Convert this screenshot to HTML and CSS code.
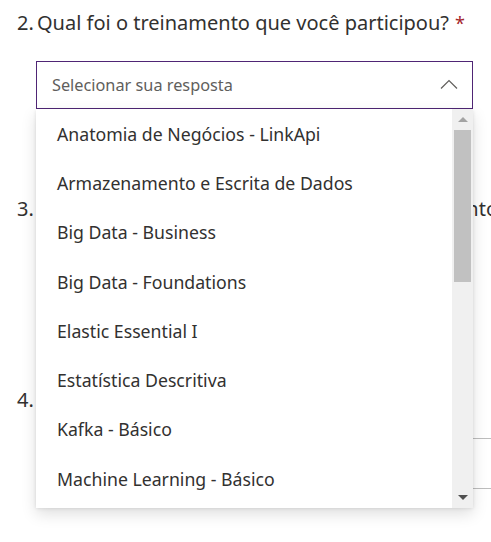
FILE: index.html
```html
<!DOCTYPE html>
<html lang="pt">
<head>
<meta charset="utf-8">
<link rel="stylesheet" href="styles.css">
</head>
<body>
<div class="page">
  <div class="question q2">
    <div class="title"><span class="num">2.</span><span class="text">Qual foi o treinamento que você participou?<span class="req">*</span></span></div>
    <div class="select-wrap">
      <div class="select">
        <span class="placeholder">Selecionar sua resposta</span>
        <svg class="chev" width="18" height="10" viewBox="0 0 18 10"><path d="M1 9.5 L9 1.5 L17 9.5" fill="none" stroke="#605e5c" stroke-width="1.2"/></svg>
      </div>
      <div class="menu">
        <ul class="options">
          <li>Anatomia de Negócios - LinkApi</li>
          <li>Armazenamento e Escrita de Dados</li>
          <li>Big Data - Business</li>
          <li>Big Data - Foundations</li>
          <li>Elastic Essential I</li>
          <li>Estatística Descritiva</li>
          <li>Kafka - Básico</li>
          <li>Machine Learning - Básico</li>
          <li>Python - Básico</li>
        </ul>
        <div class="scrollbar">
          <div class="arrow up"></div>
          <div class="track"><div class="thumb"></div></div>
          <div class="arrow down"></div>
        </div>
      </div>
    </div>
  </div>
  <div class="question q3">
    <div class="title"><span class="num">3.</span><span class="text">Como você avaliaria o seu nível de conhecimento</span></div>
  </div>
  <div class="question q4">
    <div class="title"><span class="num">4.</span><span class="text">Avalie os itens abaixo</span></div>
    <div class="rows">
      <div class="row"></div>
      <div class="row"></div>
    </div>
  </div>
</div>
</body>
</html>
```
FILE: styles.css
```css
html, body {
  margin: 0;
  padding: 0;
  background: #ffffff;
}
body {
  width: 491px;
  height: 542px;
  overflow: hidden;
  font-family: "Noto Sans", "Open Sans", sans-serif;
  color: #323130;
}
.page {
  padding: 9px 0 0 17px;
}
.title {
  display: flex;
  white-space: nowrap;
  font-size: 20px;
  line-height: 28px;
  color: #323130;
}
.num {
  width: 20px;
  flex: none;
}
.req {
  color: #a4262c;
  margin-left: 6px;
  font-size: 18px;
}
.select-wrap {
  position: relative;
  margin: 24px 0 0 19px;
  width: 437px;
}
.select {
  box-sizing: border-box;
  height: 48px;
  border: 1px solid #4f2575;
  display: flex;
  align-items: center;
  justify-content: space-between;
  padding: 0 14px 0 15px;
}
.placeholder {
  font-size: 16.3px;
  color: #605e5c;
}
.chev {
  display: block;
  margin-top: -2px;
}
.menu {
  position: absolute;
  left: 0;
  top: 48px;
  width: 437px;
  height: 399px;
  background: #ffffff;
  box-shadow: 0 6.4px 14.4px rgba(0,0,0,0.13), 0 1.2px 3.6px rgba(0,0,0,0.11);
  display: flex;
  overflow: hidden;
  z-index: 2;
}
.options {
  list-style: none;
  margin: 0;
  padding: 0;
  flex: 1;
}
.options li {
  height: 49.3px;
  display: flex;
  align-items: center;
  padding-left: 21px;
  font-size: 17.7px;
  color: #323130;
  white-space: nowrap;
}
.scrollbar {
  width: 21px;
  flex: none;
  background: #f0f0f0;
  display: flex;
  flex-direction: column;
  align-items: center;
}
.arrow {
  height: 21px;
  width: 21px;
  display: flex;
  align-items: center;
  justify-content: center;
}
.arrow::before {
  content: "";
  border-left: 5px solid transparent;
  border-right: 5px solid transparent;
}
.arrow.up::before {
  border-bottom: 5px solid #a3a3a3;
}
.arrow.down::before {
  border-top: 5px solid #505050;
}
.track {
  flex: 1;
  width: 100%;
  display: flex;
  justify-content: center;
}
.thumb {
  width: 17px;
  height: 152px;
  background: #c1c1c1;
}
.q3 {
  margin-top: 86px;
}
.q4 {
  margin-top: 163px;
}
.rows {
  margin: 24px 0 0 19px;
}
.row {
  height: 49px;
  border-top: 1px solid #bdbdbd;
}
```
